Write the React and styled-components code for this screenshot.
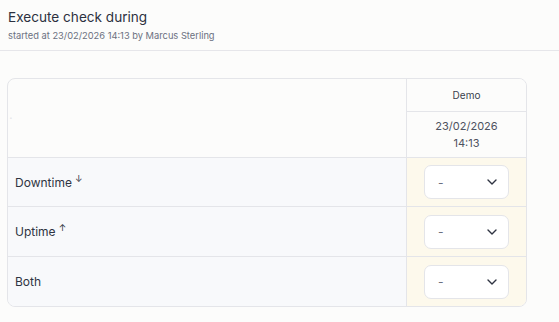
import React from 'react';
import styled, { createGlobalStyle } from 'styled-components';

const GlobalStyle = createGlobalStyle`
  html, body {
    margin: 0;
    padding: 0;
    background: #fcfcfb;
    font-family: Inter, "Noto Sans", sans-serif;
    color: #2f3442;
  }
`;

const Header = styled.div`
  height: 51px;
  box-sizing: border-box;
  padding: 8px 8px 0;
  border-bottom: 1px solid #e6e6ea;
`;

const Title = styled.div`
  font-size: 13.6px;
  line-height: 18px;
  color: #2c3140;
`;

const Subtitle = styled.div`
  margin-top: 4px;
  font-size: 9.3px;
  line-height: 12px;
  color: #6b7080;
`;

const Wrap = styled.div`
  padding: 27px 0 0 7px;
`;

const Table = styled.div`
  width: 520px;
  box-sizing: border-box;
  border: 1px solid #e4e5e9;
  border-radius: 8px;
  overflow: hidden;
  display: grid;
  grid-template-columns: 399px 1fr;
  grid-template-rows: 33px 46px 49px 50px 49px;
`;

const Cell = styled.div`
  display: flex;
  align-items: center;
  justify-content: ${p => (p.center ? 'center' : 'flex-start')};
  text-align: center;
  padding: ${p => (p.center ? '0' : '0 0 0 7px')};
  background: ${p => p.bg || '#fcfcfb'};
  border-right: ${p => (p.last ? 'none' : '1px solid #e4e5e9')};
  border-bottom: ${p => (p.bottom ? 'none' : '1px solid #e4e5e9')};
  font-size: ${p => p.size || 12}px;
  color: ${p => p.color || '#2f3442'};
  line-height: 17px;
`;

const Corner = styled.div`
  grid-row: span 2;
  display: flex;
  align-items: center;
  padding-left: 2px;
  border-right: 1px solid #e4e5e9;
  border-bottom: 1px solid #e4e5e9;
  font-size: 5px;
  color: #c8cad0;
`;

const Arrow = styled.span`
  font-size: 9px;
  margin-left: 3px;
  position: relative;
  top: -4px;
`;

const Select = styled.div`
  width: 85px;
  height: 34px;
  box-sizing: border-box;
  border: 1px solid #e4e5e9;
  border-radius: 7px;
  background: #fff;
  display: flex;
  align-items: center;
  justify-content: space-between;
  padding: 0 11px 0 13px;
  font-size: 12px;
  color: #6b7080;
`;

const Chevron = () => (
  <svg width="10" height="6" viewBox="0 0 10 6">
    <path d="M1 1l4 4 4-4" fill="none" stroke="#2f3442" strokeWidth="1.4" strokeLinecap="round" strokeLinejoin="round" />
  </svg>
);

const rows = [
  { label: 'Downtime', arrow: '↓' },
  { label: 'Uptime', arrow: '↑' },
  { label: 'Both' },
];

export default function App() {
  return (
    <>
      <GlobalStyle />
      <Header>
        <Title>Execute check during</Title>
        <Subtitle>started at 23/02/2026 14:13 by Marcus Sterling</Subtitle>
      </Header>
      <Wrap>
        <Table>
          <Corner>▫</Corner>
          <Cell center last size={10} color="#3a3f4c">Demo</Cell>
          <Cell center last size={11} color="#4d5260">23/02/2026<br />14:13</Cell>
          {rows.map((r, i) => (
            <React.Fragment key={r.label}>
              <Cell bg="#f8f9fb" bottom={i === rows.length - 1}>
                {r.label}
                {r.arrow && <Arrow>{r.arrow}</Arrow>}
              </Cell>
              <Cell center last bg="#fdf9ec" bottom={i === rows.length - 1}>
                <Select>
                  <span>-</span>
                  <Chevron />
                </Select>
              </Cell>
            </React.Fragment>
          ))}
        </Table>
      </Wrap>
    </>
  );
}
